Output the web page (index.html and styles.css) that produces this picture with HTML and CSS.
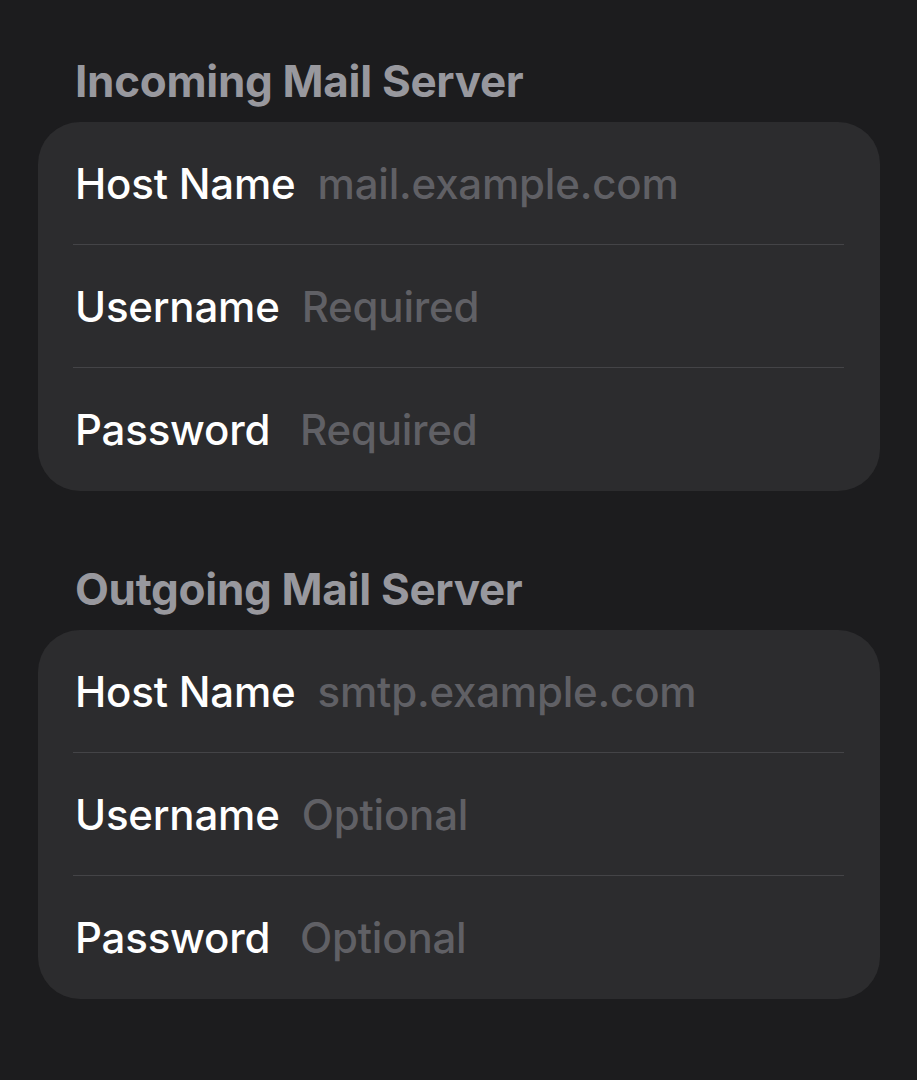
FILE: index.html
```html
<!DOCTYPE html>
<html>
<head>
<meta charset="utf-8">
<link rel="stylesheet" href="styles.css">
</head>
<body>
<main class="page">
  <section class="group">
    <h2 class="group-title">Incoming Mail Server</h2>
    <div class="card">
      <div class="row"><span class="label">Host Name</span><span class="value">mail.example.com</span></div>
      <div class="row"><span class="label label-fixed">Username</span><span class="value">Required</span></div>
      <div class="row"><span class="label label-fixed">Password</span><span class="value">Required</span></div>
    </div>
  </section>
  <section class="group">
    <h2 class="group-title">Outgoing Mail Server</h2>
    <div class="card">
      <div class="row"><span class="label">Host Name</span><span class="value">smtp.example.com</span></div>
      <div class="row"><span class="label label-fixed">Username</span><span class="value">Optional</span></div>
      <div class="row"><span class="label label-fixed">Password</span><span class="value">Optional</span></div>
    </div>
  </section>
</main>
</body>
</html>
```
FILE: styles.css
```css
html, body {
  margin: 0;
  padding: 0;
  background: #1c1c1e;
}
body {
  font-family: Inter, "Noto Sans", "Liberation Sans", sans-serif;
  -webkit-font-smoothing: antialiased;
}
.page {
  padding: 55px 37px 0 38px;
  display: flex;
  flex-direction: column;
  gap: 72px;
}
.group {
  display: flex;
  flex-direction: column;
}
.group-title {
  margin: 0;
  padding: 0 0 15px 37px;
  font-size: 44px;
  line-height: 52px;
  font-weight: 700;
  color: #98989e;
  letter-spacing: -0.3px;
}
.card {
  background: #2c2c2e;
  border-radius: 42px;
  display: flex;
  flex-direction: column;
}
.row {
  height: 122px;
  margin-left: 35px;
  margin-right: 36px;
  padding-left: 2px;
  display: flex;
  align-items: center;
  gap: 22px;
  border-bottom: 1px solid #444447;
  font-size: 42px;
  letter-spacing: -0.2px;
}
.row:last-child {
  border-bottom: none;
  height: 123px;
}
.label {
  color: #ffffff;
  font-weight: 500;
  white-space: nowrap;
}
.label-fixed {
  flex: 0 0 203px;
}
.value {
  color: #606065;
  font-weight: 500;
}
```
